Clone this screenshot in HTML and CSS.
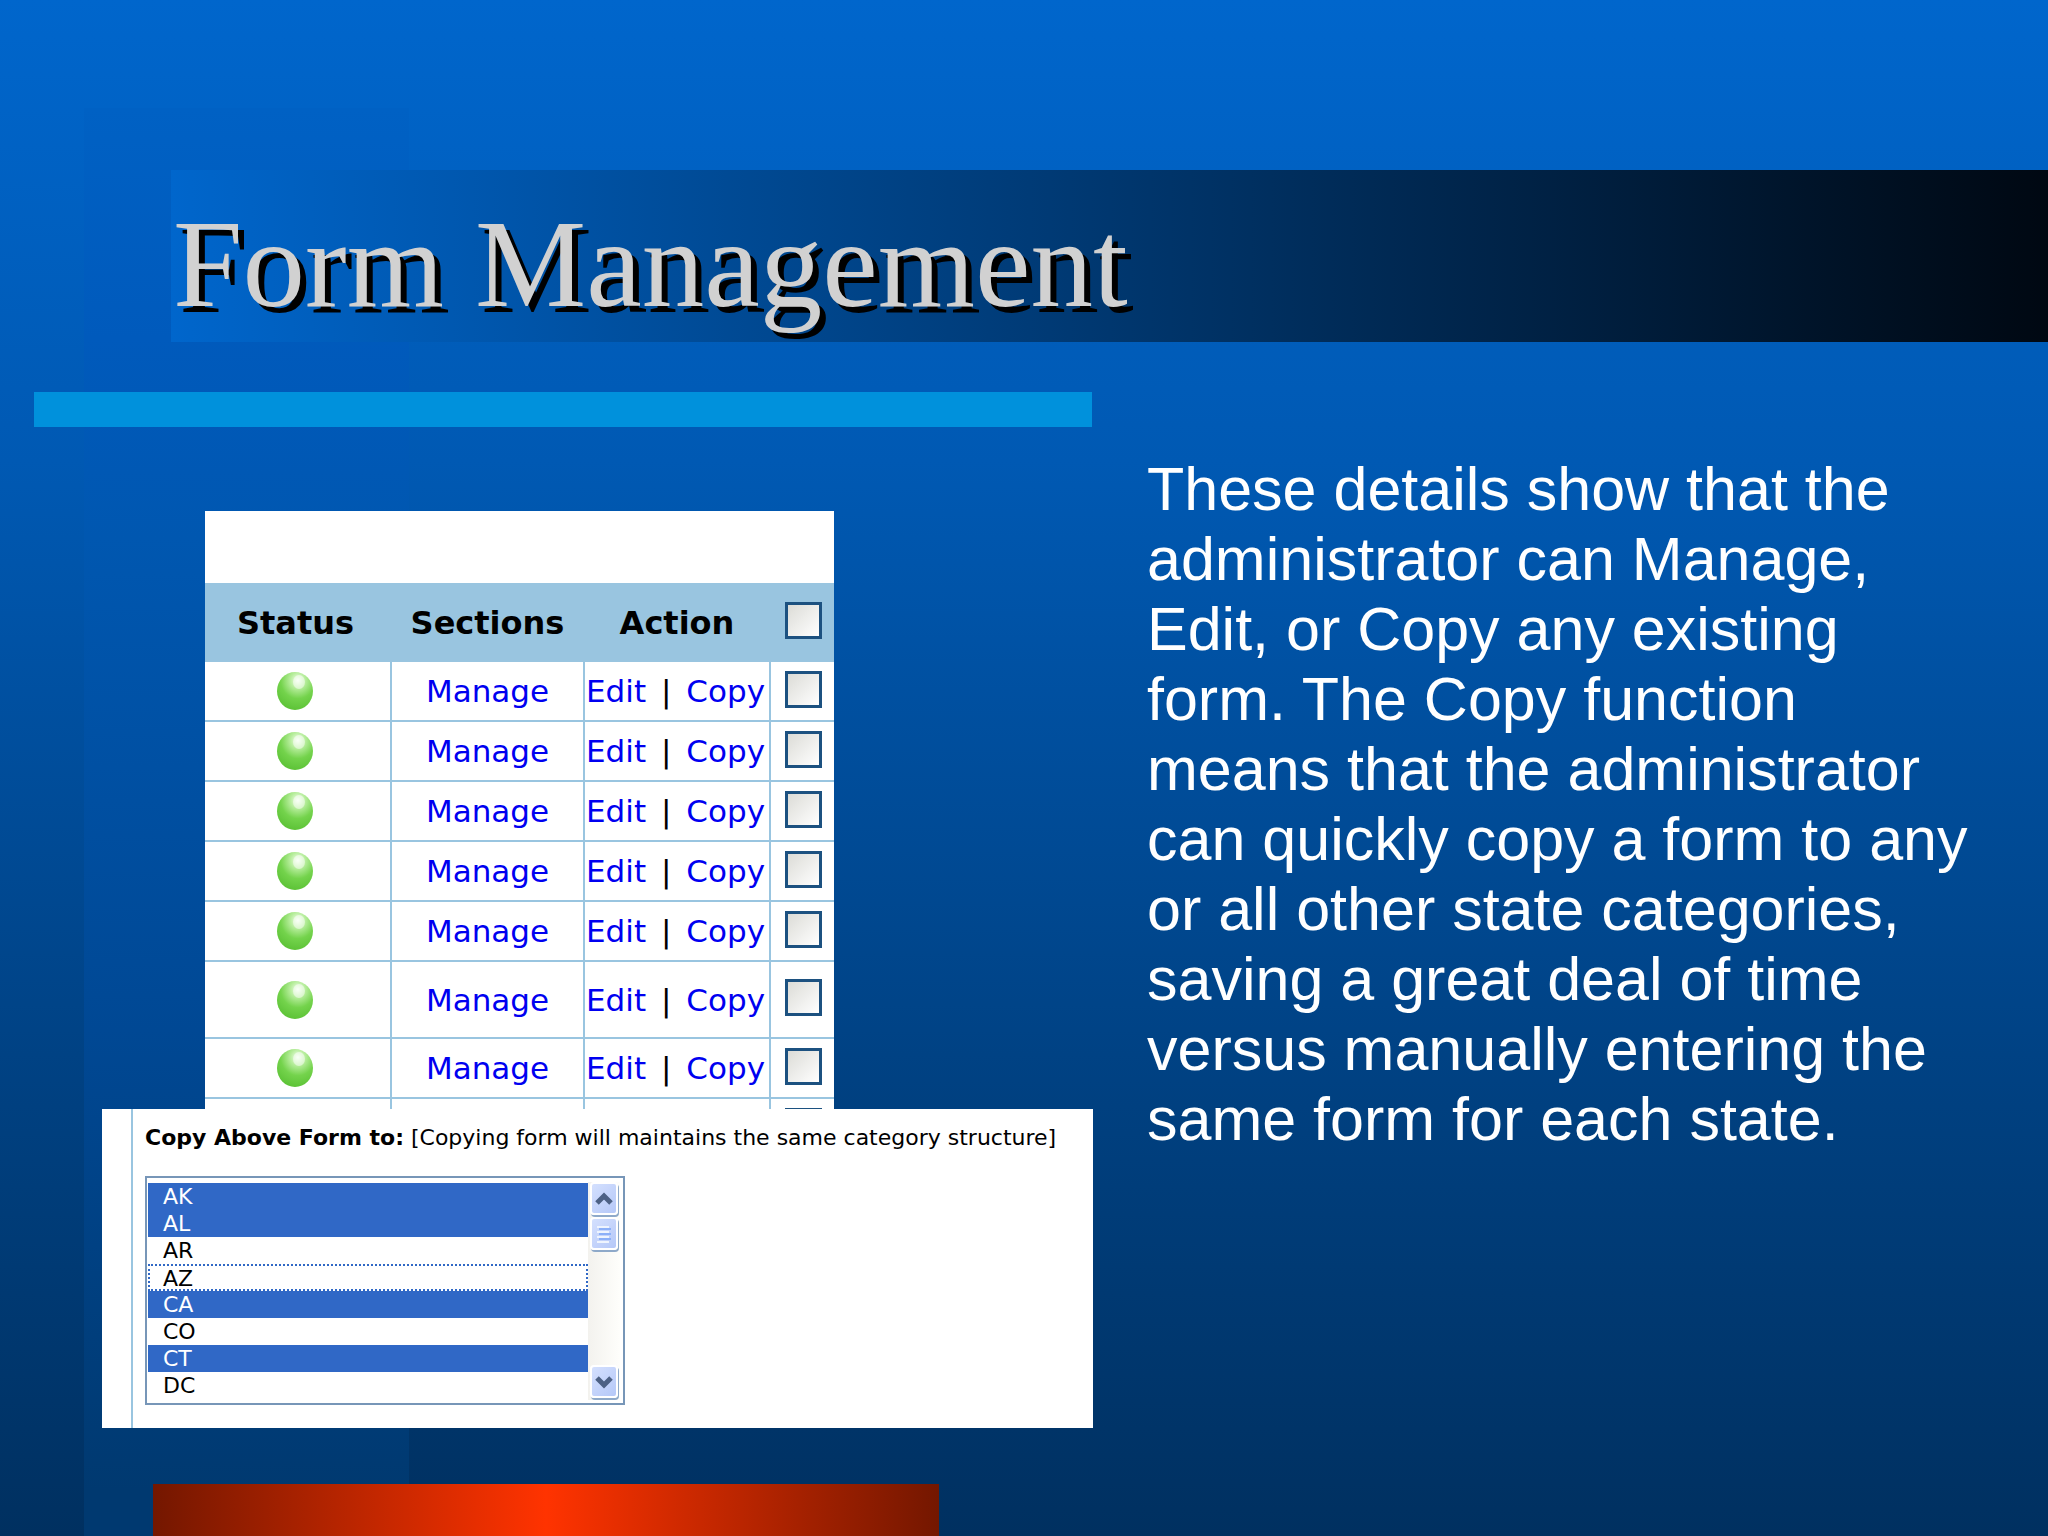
FILE: index.html
```html
<!DOCTYPE html>
<html lang="en">
<head>
<meta charset="utf-8">
<title>Form Management</title>
<link rel="stylesheet" href="styles.css">
</head>
<body>
<svg width="0" height="0" class="defs" aria-hidden="true">
  <defs>
    <radialGradient id="ball" cx="0.58" cy="0.22" r="0.8">
      <stop offset="0" stop-color="#f4fff0"/>
      <stop offset="0.25" stop-color="#b9ee9f"/>
      <stop offset="0.6" stop-color="#74d34c"/>
      <stop offset="1" stop-color="#5cc236"/>
    </radialGradient>
    <symbol id="status" viewBox="0 0 38 40">
      <ellipse cx="19" cy="20" rx="18" ry="19" fill="url(#ball)"/>
      <ellipse cx="23" cy="11" rx="6" ry="7" fill="#fff" opacity="0.5"/>
    </symbol>
  </defs>
</svg>
<main class="slide">
  <header class="band"><h1 class="title">Form Management</h1></header>
  <div class="rule"></div>
  <div class="content">
    <div class="shots">
      <div class="forms">
        <table class="grid">
          <colgroup><col class="c-status"><col class="c-sections"><col class="c-action"><col class="c-check"></colgroup>
          <thead>
            <tr><th>Status</th><th>Sections</th><th>Action</th><th><input class="check" type="checkbox" aria-label="Select all forms"></th></tr>
          </thead>
          <tbody>
            <tr><td><svg class="ball" role="img" aria-label="Active"><use href="#status"/></svg></td><td><a href="#">Manage</a></td><td><div class="actions"><a href="#">Edit</a><span>|</span><a href="#">Copy</a></div></td><td><input class="check" type="checkbox" aria-label="Select form 1"></td></tr>
            <tr><td><svg class="ball" role="img" aria-label="Active"><use href="#status"/></svg></td><td><a href="#">Manage</a></td><td><div class="actions"><a href="#">Edit</a><span>|</span><a href="#">Copy</a></div></td><td><input class="check" type="checkbox" aria-label="Select form 2"></td></tr>
            <tr><td><svg class="ball" role="img" aria-label="Active"><use href="#status"/></svg></td><td><a href="#">Manage</a></td><td><div class="actions"><a href="#">Edit</a><span>|</span><a href="#">Copy</a></div></td><td><input class="check" type="checkbox" aria-label="Select form 3"></td></tr>
            <tr><td><svg class="ball" role="img" aria-label="Active"><use href="#status"/></svg></td><td><a href="#">Manage</a></td><td><div class="actions"><a href="#">Edit</a><span>|</span><a href="#">Copy</a></div></td><td><input class="check" type="checkbox" aria-label="Select form 4"></td></tr>
            <tr><td><svg class="ball" role="img" aria-label="Active"><use href="#status"/></svg></td><td><a href="#">Manage</a></td><td><div class="actions"><a href="#">Edit</a><span>|</span><a href="#">Copy</a></div></td><td><input class="check" type="checkbox" aria-label="Select form 5"></td></tr>
            <tr class="tall"><td><svg class="ball" role="img" aria-label="Active"><use href="#status"/></svg></td><td><a href="#">Manage</a></td><td><div class="actions"><a href="#">Edit</a><span>|</span><a href="#">Copy</a></div></td><td><input class="check" type="checkbox" aria-label="Select form 6"></td></tr>
            <tr><td><svg class="ball" role="img" aria-label="Active"><use href="#status"/></svg></td><td><a href="#">Manage</a></td><td><div class="actions"><a href="#">Edit</a><span>|</span><a href="#">Copy</a></div></td><td><input class="check" type="checkbox" aria-label="Select form 7"></td></tr>
            <tr><td><svg class="ball" role="img" aria-label="Active"><use href="#status"/></svg></td><td></td><td></td><td><input class="check" type="checkbox" aria-label="Select form 8"></td></tr>
          </tbody>
        </table>
      </div>
      <section class="copy">
        <div class="copy-body">
          <label class="copy-label" for="states"><b>Copy Above Form to:</b> [Copying form will maintains the same category structure]</label>
          <div class="listbox">
            <select class="states" id="states" multiple size="8">
              <option selected>AK</option>
              <option selected>AL</option>
              <option>AR</option>
              <option class="current">AZ</option>
              <option selected>CA</option>
              <option>CO</option>
              <option selected>CT</option>
              <option>DC</option>
            </select>
            <div class="scroll">
              <button class="knob" type="button" aria-label="Scroll up"><svg width="18" height="14" viewBox="0 0 18 14"><path d="M2 11 9 4l7 7" fill="none" stroke="#4d6185" stroke-width="5"/></svg></button>
              <button class="knob" type="button" aria-label="Scroll position"><svg width="14" height="18" viewBox="0 0 14 18"><path d="M0 2h12M0 7h12M0 12h12M0 17h12" stroke="#eef4fe" stroke-width="2"/><path d="M2 4h12M2 9h12M2 14h12" stroke="#8cb0f8" stroke-width="2"/></svg></button>
              <button class="knob knob-down" type="button" aria-label="Scroll down"><svg width="18" height="14" viewBox="0 0 18 14"><path d="M2 3l7 7 7-7" fill="none" stroke="#4d6185" stroke-width="5"/></svg></button>
            </div>
          </div>
        </div>
      </section>
    </div>
    <p class="text">These details show that the administrator can Manage, Edit, or Copy any existing form. The Copy function means that the administrator can quickly copy a form to any or all other state categories, saving a great deal of time versus manually entering the same form for each state.</p>
  </div>
  <footer class="foot"></footer>
</main>
</body>
</html>
```
FILE: styles.css
```css
* {
  box-sizing: border-box;
}

body {
  margin: 0;
}

.defs {
  display: block;
}

.slide {
  display: flex;
  flex-direction: column;
  min-height: 100vh;
  padding-top: 170px;
  background:
    linear-gradient(#0061c4, #005abc 15%, #0057b0 28%, #004894 60%, #003970 90%) 84px 108px / 325px 100% no-repeat,
    linear-gradient(#0066cc, #0059b3 30%, #004080 72%, #003060);
}

.band {
  height: 172px;
  margin-left: 171px;
  padding: 22px 0 0 2px;
  background: linear-gradient(90deg, #0066cc, #000812);
}

.title {
  margin: 0;
  color: #d1d1d1;
  font: 125px/144px "Liberation Serif", serif;
  white-space: nowrap;
  text-shadow: 6px 6px 0 #000;
}

.rule {
  width: 1058px;
  max-width: 90%;
  height: 35px;
  margin: 50px 0 0 34px;
  background: #0091dc;
}

.content {
  display: flex;
  gap: 54px;
  padding: 20px 56px 0 102px;
}

.shots {
  flex: none;
  width: 991px;
  padding-top: 64px;
}

.forms {
  width: 629px;
  margin-left: 103px;
  padding-top: 72px;
  background: #fff;
}

.grid {
  width: 100%;
  table-layout: fixed;
  border-spacing: 0;
  font: 31px/36px "DejaVu Sans", sans-serif;
  text-align: center;
}

.c-status {
  width: 187px;
}

.c-sections {
  width: 193px;
}

.c-action {
  width: 186px;
}

.grid th {
  height: 79px;
  padding: 0 2px 0 0;
  background: #99c5e0;
  color: #000;
  font-size: 32px;
}

.grid td {
  height: 60px;
  padding: 0;
  border-right: 2px solid #99c5e0;
  border-bottom: 2px solid #99c5e0;
}

.grid .tall td {
  height: 77px;
}

.grid th:first-child,
.grid td:first-child {
  padding-right: 6px;
}

.grid th:last-child,
.grid td:last-child {
  padding: 0 0 4px 2px;
  border-right: 0;
}

.grid a {
  color: #0000f0;
  text-decoration: none;
}

.actions {
  display: flex;
  justify-content: space-between;
  padding: 0 4px 0 1px;
}

.ball {
  display: block;
  width: 38px;
  height: 40px;
  margin: 0 auto;
}

.check {
  appearance: none;
  display: block;
  width: 37px;
  height: 37px;
  margin: 0 auto;
  border: 3px solid #1c5180;
  background: linear-gradient(135deg, #dcdcd7, #fff);
}

.copy {
  position: relative;
  margin-top: -50px;
  padding-left: 29px;
  background: #fff;
}

.copy-body {
  padding: 15px 0 23px 12px;
  border-left: 2px solid #99c5e0;
  font: 22px/28px "DejaVu Sans", sans-serif;
}

.copy-label {
  display: block;
  margin-bottom: 24px;
  white-space: nowrap;
}

.listbox {
  display: flex;
  width: 480px;
  height: 229px;
  padding: 4px 3px 3px 1px;
  border: 2px solid #7796b8;
}

.states {
  flex: 1;
  height: 218px;
  margin: 0;
  padding: 1px 0 0;
  border: 0;
  border-radius: 0;
  outline: 0;
  background: #fff;
  color: #000;
  font: 22px/27px "DejaVu Sans", sans-serif;
  overflow: hidden;
  scrollbar-width: none;
}

.states option {
  height: 27px;
  min-height: 27px;
  padding: 1px 0 0 15px;
  border-radius: 0;
  line-height: 26px;
}

.states option:checked {
  background: #3068c6 linear-gradient(#3068c6, #3068c6);
  color: #fff;
}

.states .current {
  padding: 0 0 0 13px;
  border: 2px dotted #3068c6;
  line-height: 23px;
}

.scroll {
  display: flex;
  flex-direction: column;
  gap: 2px;
  width: 32px;
  padding: 0 2px 2px 2px;
  background: linear-gradient(90deg, #f3f2ee, #fefefb);
}

.knob {
  display: flex;
  align-items: center;
  justify-content: center;
  height: 33px;
  padding: 0;
  border: 2px solid #fff;
  border-radius: 4px;
  background: linear-gradient(135deg, #d4e0fe, #b5c8f8);
  box-shadow: 1px 2px 0 #8ea9c9;
}

.knob-down {
  margin-top: auto;
}

.text {
  flex: 1;
  margin: 0;
  padding-top: 7px;
  color: #fff;
  font: 61px/70px "Liberation Sans", sans-serif;
}

.foot {
  width: 786px;
  max-width: 80%;
  height: 52px;
  margin: auto 0 0 153px;
  background: linear-gradient(90deg, #741700, #ff3300 50%, #741700);
}
```
